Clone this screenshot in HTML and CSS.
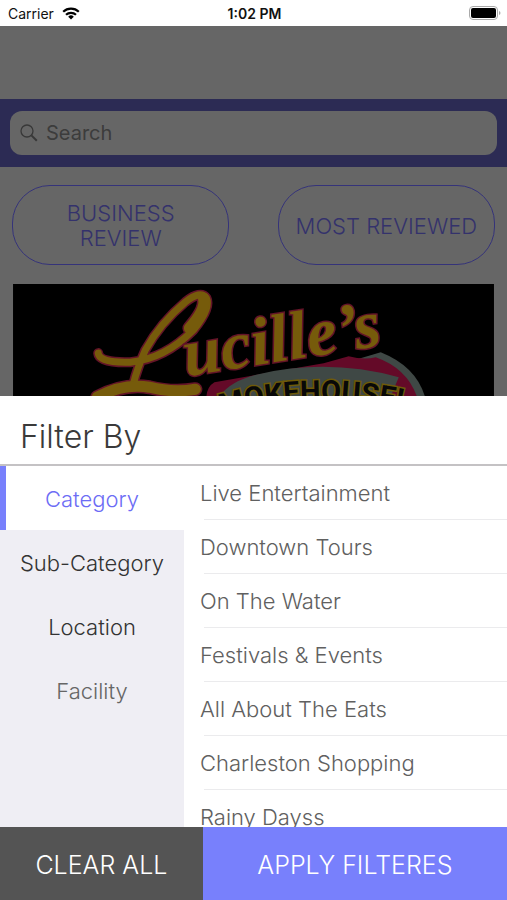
FILE: index.html
```html
<!DOCTYPE html>
<html lang="en">
<head>
<meta charset="utf-8">
<meta name="viewport" content="width=device-width, initial-scale=1">
<title>Filter By</title>
<link rel="stylesheet" href="styles.css">
</head>
<body>
<div class="status">
  <div class="carrier">
    <span>Carrier</span>
    <svg class="wifi" viewBox="0 0 18 13" aria-hidden="true">
      <g fill="none" stroke="#000" stroke-width="2.2">
        <path d="M1.2 4.8a11.2 11.2 0 0 1 15.6 0"/>
        <path d="M4 7.8a7.2 7.2 0 0 1 10 0"/>
      </g>
      <path d="M9 12.6l-2.8-2.9a4 4 0 0 1 5.6 0z"/>
    </svg>
  </div>
  <span class="time">1:02 PM</span>
  <svg class="battery" viewBox="0 0 32 14" aria-hidden="true">
    <rect x=".5" y=".5" width="28" height="13" rx="3.5" fill="#fff" stroke="#aaa"/>
    <rect x="2" y="2" width="25" height="10" rx="2" fill="#000"/>
    <path d="M30 5v4q1.5-.6 1.5-2T30 5z" fill="#aaa"/>
  </svg>
</div>

<main class="page">
  <div class="searchbar">
    <label class="search">
      <svg class="lens" viewBox="0 0 18 18" aria-hidden="true">
        <g fill="none" stroke="#383838">
          <circle cx="7" cy="7" r="6" stroke-width="1.3"/>
          <path d="M11.4 11.4l5.4 5.4" stroke-width="2"/>
        </g>
      </svg>
      <input type="search" placeholder="Search" aria-label="Search">
    </label>
  </div>
  <div class="pills">
    <button type="button">BUSINESS REVIEW</button>
    <button type="button">MOST REVIEWED</button>
  </div>
  <svg class="banner" viewBox="0 0 480 112" role="img" aria-label="Lucille's Smokehouse">
    <defs>
      <path id="arc" d="M208 131Q300 104 400 128"/>
    </defs>
    <rect width="480" height="112" fill="#000"/>
    <path d="M340 76L367 68Q402 82 411 112H340z" fill="#3f4845"/>
    <path d="M193 112Q194 102 201 98L310 79L335 72Q350 76 362 73Q393 84 403 112z" fill="#640a28"/>
    <path d="M206 112Q218 96 245 90Q315 74 385 93L377 112z" fill="#3f4845"/>
    <text class="house"><textPath href="#arc">MOKEHOUSE!</textPath></text>
    <g class="script script-back">
      <text x="173" y="92" transform="rotate(-9 173 92)">ucille’s</text>
    </g>
    <g class="swash edge">
      <path d="M85 69Q86 79 117 78Q151 75 180 46Q198 24 193 14Q187 6 172 18Q147 39 132 66Q124 84 120 100" stroke-width="10"/>
      <path d="M190 14Q193 25 176 44" stroke-width="14"/>
      <path d="M84 113Q110 99 136 103Q160 109 182 105" stroke-width="14"/>
    </g>
    <g class="swash gold">
      <path d="M85 69Q86 79 117 78Q151 75 180 46Q198 24 193 14Q187 6 172 18Q147 39 132 66Q124 84 120 100" stroke-width="7"/>
      <path d="M190 14Q193 25 176 44" stroke-width="11"/>
      <path d="M84 113Q110 99 136 103Q160 109 182 105" stroke-width="11"/>
    </g>
    <g class="script">
      <text x="173" y="92" transform="rotate(-9 173 92)">ucille’s</text>
    </g>
  </svg>
</main>

<section class="sheet" aria-labelledby="sheet-title">
  <h1 id="sheet-title">Filter By</h1>
  <div class="panes">
    <nav class="tabs">
      <button type="button" class="active">Category</button>
      <button type="button">Sub-Category</button>
      <button type="button">Location</button>
      <button type="button" class="muted">Facility</button>
    </nav>
    <ul class="options">
      <li>Live Entertainment</li>
      <li>Downtown Tours</li>
      <li>On The Water</li>
      <li>Festivals &amp; Events</li>
      <li>All About The Eats</li>
      <li>Charleston Shopping</li>
      <li>Rainy Dayss</li>
    </ul>
  </div>
  <div class="actions">
    <button type="button" class="clear">CLEAR ALL</button>
    <button type="button" class="apply">APPLY FILTERES</button>
  </div>
</section>
</body>
</html>
```
FILE: styles.css
```css
* { box-sizing: border-box; }

body {
  margin: 0;
  height: 100vh;
  display: flex;
  flex-direction: column;
  overflow: hidden;
  background: #fff;
  font-family: Inter, "Liberation Sans", sans-serif;
  font-weight: 300;
}

button {
  margin: 0;
  padding: 0;
  border: 0;
  background: none;
  font: inherit;
  color: inherit;
}

.status {
  flex: none;
  display: grid;
  grid-template-columns: 1fr auto 1fr;
  align-items: center;
  height: 26px;
  padding: 0 6px 0 8px;
  font-size: 14px;
  font-weight: 400;
  color: #111;
}
.carrier { display: flex; align-items: center; gap: 8px; }
.wifi { width: 18px; height: 13px; }
.time { font-weight: 600; }
.battery { width: 32px; height: 14px; justify-self: end; }

.page {
  flex: none;
  padding-top: 73px;
  background: #666;
}
.searchbar { padding: 12px 10px; background: #2c2b54; }
.search {
  display: flex;
  align-items: center;
  gap: 8px;
  height: 44px;
  padding: 0 10px;
  border-radius: 12px;
  background: #666;
}
.lens { flex: none; width: 18px; height: 18px; }
.search input {
  flex: 1;
  min-width: 0;
  padding: 0;
  border: 0;
  outline: 0;
  background: none;
  font: 400 20px Inter, "Liberation Sans", sans-serif;
  color: #383838;
}
.search input::placeholder { color: #3c3c3c; opacity: 1; }

.pills {
  display: flex;
  justify-content: space-between;
  padding: 18px 12px 19px;
}
.pills button {
  width: 45%;
  height: 80px;
  padding: 2px 16px 0;
  border: 1px solid #35337a;
  border-radius: 38px;
  font-size: 22px;
  line-height: 25px;
  color: #34326c;
}

.banner {
  display: block;
  width: calc(100% - 26px);
  margin: 0 13px;
}
.house {
  font: 700 29px Roboto, "Liberation Sans", sans-serif;
  fill: #080808;
  stroke: #6e5a08;
  stroke-width: 3px;
  paint-order: stroke;
}
.swash { fill: none; stroke-linecap: round; }
.edge { stroke: #641428; }
.gold { stroke: #765b0b; }
.script {
  font: italic 700 68px "Liberation Serif", serif;
  fill: #765b0b;
  stroke: #641428;
  stroke-width: 3px;
  paint-order: stroke;
}
.script-back { stroke: #000; stroke-width: 14px; stroke-linejoin: round; }

.sheet {
  flex: 1;
  min-height: 0;
  display: flex;
  flex-direction: column;
  background: #fff;
}
h1 {
  flex: none;
  margin: 0;
  padding: 20px 20px 7px;
  border-bottom: 2px solid #c4c2c4;
  font-size: 32px;
  line-height: 41px;
  font-weight: 300;
  color: #3a3a3a;
}
.panes { flex: 1; min-height: 0; display: flex; }
.tabs {
  width: 184px;
  display: flex;
  flex-direction: column;
  background: #efeef4;
}
.tabs button {
  height: 64px;
  padding-top: 2px;
  font-size: 22px;
  color: #333;
}
.tabs .active {
  padding-right: 6px;
  border-left: 6px solid #7880fc;
  background: #fff;
  color: #6c6cf5;
}
.tabs .muted { color: #666; }

.options {
  flex: 1;
  margin: 0;
  padding: 0 0 0 16px;
  overflow: hidden;
  list-style: none;
  font-size: 22px;
  line-height: 54px;
  color: #606060;
}
.options li {
  background: linear-gradient(#ebebed, #ebebed) 4px 100% / 100% 1px no-repeat;
}

.actions {
  flex: none;
  display: flex;
  height: 73px;
  font-size: 25px;
  color: #fff;
}
.clear { flex: 2; background: #545454; }
.apply { flex: 3; background: #7880fc; }
.actions button { padding-top: 2px; color: #fff; }
```
